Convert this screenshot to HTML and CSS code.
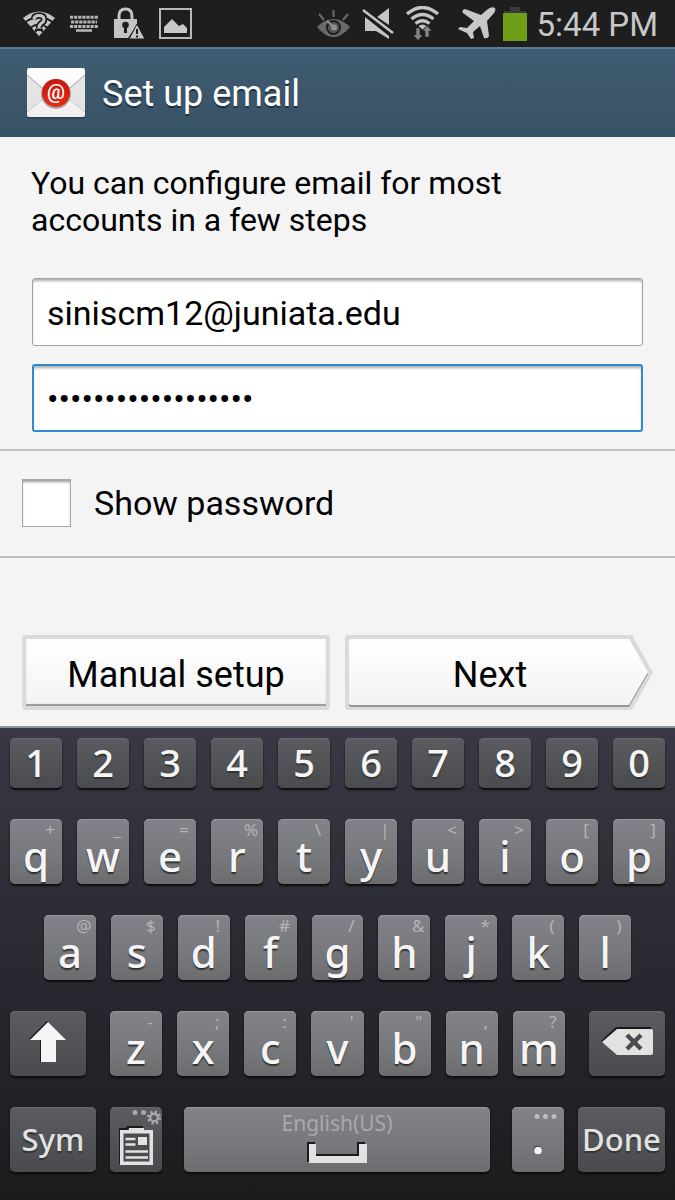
FILE: index.html
```html
<!DOCTYPE html>
<html lang="en">
<head>
<meta charset="utf-8">
<meta name="viewport" content="width=device-width, initial-scale=1">
<title>Set up email</title>
<link rel="stylesheet" href="styles.css">
</head>
<body>
<div class="phone">
  <div class="status-bar">
    <div class="status-group">
      <svg class="icon-wifi-unknown" width="34" height="28" viewBox="0 0 34 28" aria-hidden="true">
        <path d="M1 8Q17-5 33 8L17 26Z" fill="#c4c4c4"/>
        <path d="M3 12.500Q17 2 31 12.500M8 18Q17 11 26 18" fill="none" stroke="#1e1e1e" stroke-width="1.800"/>
        <path d="M12 9.500Q12 5.500 17 5.500T22 9.500Q22 12 19 13.500Q17 15 17 18.500" fill="none" stroke="#1e1e1e" stroke-width="6.500"/>
        <path d="M12 9.500Q12 5.500 17 5.500T22 9.500Q22 12 19 13.500Q17 15 17 18" fill="none" stroke="#c4c4c4" stroke-width="3"/>
        <path d="M13 19H21V22H13Z" fill="#1e1e1e"/>
        <path d="M14.500 21H19.500L17 26Z" fill="#c4c4c4"/>
      </svg>
      <svg class="icon-keyboard" width="28" height="18" viewBox="0 0 28 18" aria-hidden="true">
        <path d="M0 2.200H28M1 7H27M0 11.500H28" stroke="#b4b4b4" stroke-width="3" stroke-dasharray="3.200 .9"/>
        <path d="M6 15.500H22" stroke="#b4b4b4" stroke-width="2.600"/>
      </svg>
      <svg class="icon-lock" width="31" height="33" viewBox="0 0 31 33" aria-hidden="true">
        <path d="M5 13V9Q5 2 11.500 2T18 9V13" fill="none" stroke="#c4c4c4" stroke-width="3"/>
        <path d="M0 12H23V18L14 31H0Z" fill="#c4c4c4"/>
        <circle cx="11.500" cy="18" r="3.300" fill="#1e1e1e"/><path d="M10 19H13V26H10Z" fill="#1e1e1e"/>
        <path d="M23 17L31 32H15Z" fill="#c4c4c4" stroke="#1e1e1e" stroke-width="1"/>
        <path d="M23 22V27M23 28.500V30.500" stroke="#1e1e1e" stroke-width="2"/>
      </svg>
      <svg class="icon-picture" width="33" height="31" viewBox="0 0 33 31" aria-hidden="true">
        <rect x="1" y="1" width="31" height="29" fill="none" stroke="#b8b8b8" stroke-width="2"/>
        <path d="M5 25V19L13 11L20 18L24 16L28 20V25Z" fill="#c8c8c8"/>
      </svg>
    </div>
    <div class="status-group status-right">
      <svg class="icon-eye" width="33" height="30" viewBox="0 0 33 30" aria-hidden="true">
        <path d="M2 5L7 11M16.500 1V8M31 5L26 11" stroke="#696969" stroke-width="2"/>
        <path d="M0 18Q8 10 16.500 10T33 18Q25 28 16.500 28T0 18Z" fill="#696969"/>
        <circle cx="16.500" cy="18.500" r="7.500" fill="#1e1e1e"/>
        <circle cx="16.500" cy="18.500" r="5.500" fill="#555"/>
        <circle cx="17" cy="18.500" r="3" fill="#909090"/><path d="M10 12L17 18" stroke="#909090" stroke-width="2"/>
      </svg>
      <svg class="icon-mute" width="32" height="32" viewBox="0 0 32 32" aria-hidden="true">
        <path d="M3 9L27 28V31L14 23H3Z" fill="#c4c4c4"/>
        <path d="M15 9L27 0V17Z" fill="#c4c4c4"/>
        <path d="M1 2L31 25" stroke="#1e1e1e" stroke-width="6"/>
        <path d="M1 2L31 25" stroke="#c4c4c4" stroke-width="2.600"/>
      </svg>
      <svg class="icon-wifi" width="33" height="35" viewBox="0 0 33 35" aria-hidden="true">
        <path d="M1 8Q16.500-5 32 8M5.500 13Q16.500 4 27.500 13M9.500 17.500Q16.500 12 23.500 17.500" fill="none" stroke="#c4c4c4" stroke-width="3.400"/>
        <path d="M12.500 20Q16.500 17 20.500 20L16.500 23.500Z" fill="#c4c4c4"/>
        <path d="M10 22H14V29H17L12 34.500L7 29H10ZM19 31V25H16.500L21 19.500L26 25H23V31Z" fill="#858585" stroke="#1e1e1e" stroke-width=".6"/>
      </svg>
      <svg class="icon-plane" width="38" height="33" viewBox="0 0 38 33" aria-hidden="true">
        <path d="M37 1Q34-1 30 2L23 8L7 2Q3 3 5 6L16 14L9 21L2 20L0 22L9 26L13 32L16 31L15 25L22 19L26 31Q30 32 31 29L29 14L36 6Q38 3 37 1Z" fill="#c8c8c8"/>
      </svg>
      <svg class="icon-battery" width="24" height="34" viewBox="0 0 24 34" aria-hidden="true">
        <path d="M7 0H17V4H23V6H1V4H7Z" fill="#3a3a3a"/><rect y="6" width="24" height="28" fill="#6f9f16"/>
      </svg>
      <time class="clock">5:44 PM</time>
    </div>
  </div>

  <header class="app-bar">
    <svg class="mail-logo" width="60" height="52" viewBox="0 0 60 52" aria-hidden="true">
      <defs>
        <linearGradient id="paper" x2="0" y2="1"><stop offset="0" stop-color="#fff"/><stop offset="1" stop-color="#ededed"/></linearGradient>
        <linearGradient id="seal" x2="0" y2="1"><stop offset="0" stop-color="#c8160e"/><stop offset="1" stop-color="#e42c12"/></linearGradient>
      </defs>
      <rect x="1" y="2" width="58" height="50" rx="2" fill="#22323f" opacity=".5"/>
      <rect x="1" y="1" width="58" height="49" rx="2" fill="url(#paper)"/>
      <path d="M1 9L24 28L1 45ZM59 9L36 28L59 45Z" fill="#e4e4e4"/>
      <path d="M1 8L24 28M59 8L36 28" stroke="#999" fill="none"/>
      <path d="M1 45L20 30M59 45L40 30" stroke="#ccc" fill="none"/>
      <circle cx="30" cy="27" r="15" fill="#aaa"/>
      <circle cx="30" cy="26" r="14" fill="url(#seal)"/>
      <text class="seal-sign" x="30" y="32" text-anchor="middle">@</text>
    </svg>
    <h1 class="app-title">Set up email</h1>
  </header>

  <main>
    <form class="setup">
      <div class="account">
        <p class="intro">You can configure email for most accounts in a few steps</p>
        <input class="field" type="email" aria-label="Email address" value="siniscm12@juniata.edu">
        <input class="field field-active" type="password" aria-label="Password" value="abcdefghijklmnopqr">
      </div>
      <label class="show-password"><input class="tick" type="checkbox">Show password</label>
      <div class="actions">
        <button class="action" type="button">Manual setup</button>
        <button class="action action-next" type="button">
          <svg class="next-shape" viewBox="0 0 307 75" preserveAspectRatio="none" aria-hidden="true">
            <defs><linearGradient id="face" x2="0" y2="1"><stop offset="0" stop-color="#fff"/><stop offset="1" stop-color="#f3f3f3"/></linearGradient></defs>
            <path d="M3 0H286L307 37.500L286 75H3Q0 75 0 72V3Q0 0 3 0Z" fill="#d9dbda"/>
            <path d="M6 6H283L302 39L283 72H6Q4 72 4 70V8Q4 6 6 6Z" fill="#969898"/>
            <path d="M6 4H283L302 37L283 70H6Q4 70 4 68V6Q4 4 6 4Z" fill="url(#face)"/>
          </svg>
          <span class="next-label">Next</span>
        </button>
      </div>
    </form>
  </main>

  <section class="keyboard" aria-label="Keyboard">
    <div class="key-row">
      <button class="key digit">1</button><button class="key digit">2</button><button class="key digit">3</button><button class="key digit">4</button><button class="key digit">5</button><button class="key digit">6</button><button class="key digit">7</button><button class="key digit">8</button><button class="key digit">9</button><button class="key digit">0</button>
    </div>
    <div class="key-row">
      <button class="key">q<span class="hint">+</span></button>
      <button class="key">w<span class="hint">_</span></button>
      <button class="key">e<span class="hint">=</span></button>
      <button class="key">r<span class="hint">%</span></button>
      <button class="key">t<span class="hint">\</span></button>
      <button class="key">y<span class="hint">|</span></button>
      <button class="key">u<span class="hint">&lt;</span></button>
      <button class="key">i<span class="hint">&gt;</span></button>
      <button class="key">o<span class="hint">[</span></button>
      <button class="key">p<span class="hint">]</span></button>
    </div>
    <div class="key-row key-row-home">
      <button class="key">a<span class="hint">@</span></button>
      <button class="key">s<span class="hint">$</span></button>
      <button class="key">d<span class="hint">!</span></button>
      <button class="key">f<span class="hint">#</span></button>
      <button class="key">g<span class="hint">/</span></button>
      <button class="key">h<span class="hint">&amp;</span></button>
      <button class="key">j<span class="hint">*</span></button>
      <button class="key">k<span class="hint">(</span></button>
      <button class="key">l<span class="hint">)</span></button>
    </div>
    <div class="key-row key-row-shift">
      <button class="key dark" aria-label="Shift">
        <svg class="shift" width="38" height="42" viewBox="0 0 38 42" aria-hidden="true"><path d="M0 18L18 0L20 2L12 20V41H11V18Z" fill="#18181a"/><path d="M19 1L37 19H27V41H12V19H1Z" fill="#f5f5f5"/></svg>
      </button>
      <div class="key-row key-row-inner">
        <button class="key">z<span class="hint">-</span></button>
        <button class="key">x<span class="hint">;</span></button>
        <button class="key">c<span class="hint">:</span></button>
        <button class="key">v<span class="hint">'</span></button>
        <button class="key">b<span class="hint">"</span></button>
        <button class="key">n<span class="hint">,</span></button>
        <button class="key">m<span class="hint">?</span></button>
      </div>
      <button class="key dark" aria-label="Backspace">
        <svg class="backspace" width="52" height="29" viewBox="0 0 52 29" aria-hidden="true"><path d="M0 14L15 0H50V4L16 4L3 17Z" fill="#18181a"/><path d="M1 15L16 2H50Q52 2 52 4V26Q52 28 50 28H16Z" fill="#e2e2e2"/><path d="M26 8L40 22M40 8L26 22" stroke="#4b4c4f" stroke-width="4.400"/></svg>
      </button>
    </div>
    <div class="key-row key-row-bottom">
      <button class="key dark word">Sym</button>
      <button class="key dark" aria-label="Clipboard">
        <svg class="key-art" width="52" height="60" viewBox="-7 0 52 60" aria-hidden="true">
          <g fill="#a8a8aa"><circle cx="18" cy="4.500" r="2.500"/><circle cx="26.500" cy="4.500" r="2.500"/></g>
          <circle cx="37" cy="9.500" r="3.800" fill="none" stroke="#a8a8aa" stroke-width="2.400"/>
          <circle cx="37" cy="9.500" r="5.800" fill="none" stroke="#a8a8aa" stroke-width="2.600" stroke-dasharray="2.280 2.280"/>
          <path d="M3 56V21H10.500V19H26" fill="none" stroke="#1c1c1e" stroke-width="2"/>
          <path d="M3 22H36V57H3Z" fill="#e2e2e2"/><path d="M12 20H27V24H12Z" fill="#e2e2e2"/>
          <path d="M6.500 25.500H32.500V53.500H6.500Z" fill="#4b4c4f"/>
          <path d="M8.500 31H18.500M8.500 36.500H18.500M8.500 43.500H31M8.500 49.500H31" stroke="#e2e2e2" stroke-width="2.600"/>
          <path d="M21 29H30V37H21Z" fill="#e2e2e2"/>
        </svg>
      </button>
      <button class="key space"><span class="language">English(US)</span>
        <svg width="61" height="22" viewBox="0 0 61 22" aria-hidden="true"><path d="M1 20V1H8M9 13H51V1H58" fill="none" stroke="#1c1c1e" stroke-width="2"/><path d="M2 2H9V14H52V2H60V21H2Z" fill="#e2e2e2"/></svg>
      </button>
      <button class="key" aria-label="Period">
        <svg class="key-art" width="52" height="60" viewBox="-8 2 52 60" aria-hidden="true"><g fill="#bdbdbf"><circle cx="17" cy="4.500" r="2.500"/><circle cx="25.500" cy="4.500" r="2.500"/><circle cx="34" cy="4.500" r="2.500"/></g><circle cx="17.500" cy="37.500" r="3.800" fill="#333"/><circle cx="18" cy="38.500" r="3.800" fill="#f5f5f5"/></svg>
      </button>
      <button class="key dark word">Done</button>
    </div>
  </section>
</div>
</body>
</html>
```
FILE: styles.css
```css
* { box-sizing: border-box; }

body {
  margin: 0;
  background: #1c1c1e;
  font-family: Roboto, "Liberation Sans", sans-serif;
  color: #000;
}

button, input { font: inherit; color: inherit; margin: 0; }
button { padding: 0; border: 0; background: none; }

.phone {
  display: flex;
  flex-direction: column;
  min-height: 100vh;
}

/* Status bar */
.status-bar {
  display: flex;
  justify-content: space-between;
  height: 47px;
  padding: 0 17px 0 22px;
  background: #1e1e1e;
}
.status-group { display: flex; align-items: center; gap: 14px; }
.status-right { gap: 12px; }
.icon-lock { margin-left: 2px; }
.icon-plane { margin-left: 7px; }
.icon-battery { margin-left: -5px; }
.clock {
  margin-left: -2px;
  color: #c8c8c8;
  font-size: 33px;
  line-height: 47px;
  padding-top: 2px;
}

/* Title bar */
.app-bar {
  display: flex;
  align-items: center;
  gap: 16px;
  height: 90px;
  padding: 0 26px;
  border-top: 2px solid #5c7d95;
  background: linear-gradient(#405c72, #385265);
}
.seal-sign { font: 500 20px Roboto, sans-serif; fill: #fff; }
.app-title {
  margin: 0;
  padding-top: 2px;
  color: #fff;
  font-size: 36px;
  font-weight: 400;
  text-shadow: 0 2px 1px #1f303d;
}

/* Setup form */
main { flex: 1; background: #f4f4f4; }
.account {
  display: flex;
  flex-direction: column;
  gap: 18px;
  padding: 28px 32px 17px;
  border-bottom: 2px solid #c2c2c2;
}
.intro {
  max-width: 520px;
  margin: 0 0 21px -1px;
  font-size: 32px;
  line-height: 37px;
}
.field {
  width: 100%;
  height: 68px;
  padding: 2px 15px 0 14px;
  border: 1px solid #a2a2a2;
  border-radius: 3px;
  background: #fff;
  box-shadow: inset 0 3px 3px -1px #aaa;
  font-size: 34px;
  outline: 0;
}
.field-active { border: 2px solid #318bd4; padding: 2px 14px 0 13px; }
.show-password {
  display: flex;
  align-items: center;
  gap: 23px;
  height: 107px;
  padding: 0 22px 2px;
  border-bottom: 2px solid #bcbcbc;
  font-size: 34px;
}
.tick {
  appearance: none;
  width: 49px;
  height: 48px;
  border: 1px solid #a8a8a8;
  background: #fff;
  box-shadow: inset 0 3px 3px -1px #999;
}
.actions {
  display: grid;
  grid-template-columns: 1fr 1fr;
  gap: 15px;
  padding: 77px 22px 15px;
}
.action {
  position: relative;
  height: 75px;
  padding-top: 4px;
  border: 4px solid #d9dbda;
  border-radius: 4px;
  background: linear-gradient(#fff, #f3f3f3);
  box-shadow: inset 0 -2px 1px #969898;
  font-size: 36px;
}
.action-next { border: 0; background: none; box-shadow: none; }
.next-shape { position: absolute; inset: 0; width: 100%; height: 100%; }
.next-label { position: relative; padding-right: 18px; }

/* Keyboard */
.keyboard {
  display: flex;
  flex-direction: column;
  gap: 31px;
  padding: 10px 10px 28px;
  border-top: 2px solid #8c9694;
  background: linear-gradient(#393945, #2b2c35 40%, #1c1c1e);
  font-family: "Noto Sans", "Open Sans", sans-serif;
}
.key-row { display: flex; gap: 15px; }
.key {
  position: relative;
  display: flex;
  flex: 1 1 0;
  min-width: 0;
  justify-content: center;
  align-items: center;
  height: 65px;
  padding-top: 9px;
  border-radius: 5px;
  background: linear-gradient(#828388, #77787c 60%, #6c6c6e);
  box-shadow: inset 0 1px 1px #97979b, 0 2px 2px #0c0c0e;
  color: #f5f5f5;
  font-size: 42px;
  font-weight: 500;
  line-height: 30px;
  text-shadow: 0 2px 1px #333;
}
.digit, .dark {
  padding: 0 0 4px;
  background: linear-gradient(#5b5c60, #4a4b4e);
  box-shadow: inset 0 1px 1px #6a6a6e, 0 2px 2px #0c0c0e;
}
.digit { height: 50px; padding-bottom: 2px; font-size: 38px; }
.hint {
  position: absolute;
  top: 1px;
  right: 0;
  width: 24px;
  color: #b4b4b6;
  font-size: 17px;
  font-weight: 400;
  line-height: 20px;
  text-align: center;
  text-shadow: none;
}
.key-row-home { padding: 0 34px; }
.key-row-shift, .key-row-bottom { display: grid; }
.key-row-shift { grid-template-columns: 76fr 455fr 76fr; gap: 24px; }
.key-row-bottom { grid-template-columns: 86fr 52fr 322fr 52fr 87fr; gap: 14px; }
.word { padding-bottom: 1px; color: #e2e2e2; font-size: 31px; }
.space {
  flex-direction: column;
  justify-content: flex-start;
  gap: 5px;
  margin: 0 8px;
  padding-top: 2px;
}
.language {
  color: #a9a9ab;
  font-size: 21px;
  font-weight: 400;
  line-height: 28px;
  text-shadow: none;
}
.key-art { flex: none; }
```
